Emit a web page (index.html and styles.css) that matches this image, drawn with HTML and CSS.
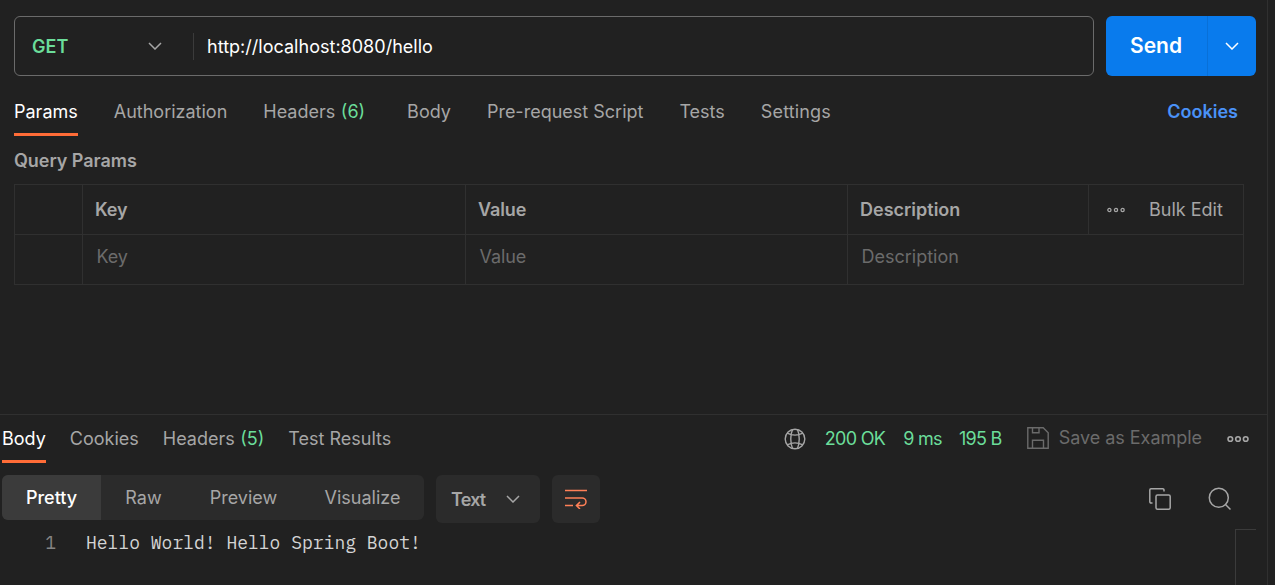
FILE: index.html
```
<!DOCTYPE html>
<html lang="en">
<head>
<meta charset="utf-8">
<title>GET http://localhost:8080/hello</title>
<link rel="stylesheet" href="styles.css">
</head>
<body>
<div class="app">
  <main class="pane">
    <section class="request">
      <div class="url-row">
        <div class="url-box">
          <div class="method"><span>GET</span>
            <svg class="chevron" width="14" height="8" viewBox="0 0 14 8"><path d="M1 1l6 6 6-6"/></svg>
          </div>
          <div class="url">http://localhost:8080/hello</div>
        </div>
        <div class="send">
          <button class="send-main">Send</button>
          <button class="send-more"><svg class="chevron" width="14" height="8" viewBox="0 0 14 8"><path d="M1 1l6 6 6-6"/></svg></button>
        </div>
      </div>
      <nav class="tabs request-tabs">
        <a class="tab active">Params</a>
        <a class="tab">Authorization</a>
        <a class="tab has-count">Headers <span class="count">(6)</span></a>
        <a class="tab">Body</a>
        <a class="tab">Pre-request Script</a>
        <a class="tab">Tests</a>
        <a class="tab settings">Settings</a>
        <a class="cookies">Cookies</a>
      </nav>
      <h2 class="section-title">Query Params</h2>
      <div class="params">
        <div class="row head">
          <div class="cell check"></div>
          <div class="cell">Key</div>
          <div class="cell">Value</div>
          <div class="cell wide">Description</div>
          <div class="cell actions">
            <svg class="dots" width="18" height="6" viewBox="0 0 18 6"><circle cx="2.4" cy="3" r="1.6"/><circle cx="9" cy="3" r="1.6"/><circle cx="15.6" cy="3" r="1.6"/></svg>
            <span>Bulk Edit</span>
          </div>
        </div>
        <div class="row entry">
          <div class="cell check"></div>
          <div class="cell">Key</div>
          <div class="cell">Value</div>
          <div class="cell wide">Description</div>
        </div>
      </div>
    </section>
    <section class="response">
      <div class="response-head">
        <nav class="tabs response-tabs">
          <a class="tab active">Body</a>
          <a class="tab">Cookies</a>
          <a class="tab">Headers <span class="count">(5)</span></a>
          <a class="tab">Test Results</a>
        </nav>
        <div class="status">
          <svg class="icon globe" width="22" height="22" viewBox="0 0 22 22"><circle cx="11" cy="11" r="9.8"/><path d="M8.500 1.600C6.200 7 6.200 15 8.500 20.400M13.500 1.600c2.300 5.400 2.300 13.400 0 18.800M3.200 5.200c4.600 2.300 11 2.300 15.600 0M3.200 16.800c4.600-2.300 11-2.300 15.600 0"/></svg>
          <span class="code">200 OK</span>
          <span class="time">9 ms</span>
          <span class="size">195 B</span>
          <span class="save">
            <svg class="icon save-icon" width="22" height="22" viewBox="0 0 22 22"><path d="M.8.8h15.400l5 5v15.400H.8zM5.500.8v5h6.500v-5M5.500 21.200v-8h11v8"/></svg>
            <span>Save as Example</span>
          </span>
          <svg class="dots big" width="22" height="8" viewBox="0 0 22 8"><circle cx="3.300" cy="4" r="2.300"/><circle cx="11" cy="4" r="2.300"/><circle cx="18.700" cy="4" r="2.300"/></svg>
        </div>
      </div>
      <div class="toolbar">
        <div class="segments">
          <span class="segment selected">Pretty</span>
          <span class="segment raw">Raw</span>
          <span class="segment preview">Preview</span>
          <span class="segment visualize">Visualize</span>
        </div>
        <div class="language"><span>Text</span><svg class="chevron" width="14" height="8" viewBox="0 0 14 8"><path d="M1 1l6 6 6-6"/></svg></div>
        <div class="wrap"><svg width="22" height="20" viewBox="0 0 22 20"><path d="M0 1.500h22M0 9h17.200a3.800 3.800 0 0 1 0 7.600H12M0 16.500h8M15 13l-3.600 3.600L15 20"/></svg></div>
        <div class="tools">
          <svg class="icon" width="22" height="22" viewBox="0 0 22 22"><path d="M3.500 15H2a1.200 1.200 0 0 1-1.200-1.200V2A1.200 1.200 0 0 1 2 .8h11.800A1.200 1.200 0 0 1 15 2v1.500"/><rect x="7" y="7" width="14.200" height="14.200" rx="1.500"/></svg>
          <svg class="icon" width="24" height="24" viewBox="0 0 24 24"><circle cx="10.800" cy="10.800" r="9.500"/><path d="M17.500 17.500l5 5"/></svg>
        </div>
      </div>
      <div class="editor">
        <span class="line-number">1</span>
        <code class="line">Hello World! Hello Spring Boot!</code>
        <div class="minimap"></div>
      </div>
    </section>
  </main>
</div>
</body>
</html>
```
FILE: styles.css
```
* { box-sizing: border-box; }
body {
  margin: 0;
  background: #212121;
  color: #a6a6a6;
  font: 18px/24px Inter, "Liberation Sans", sans-serif;
  overflow: hidden;
}
svg { display: block; fill: none; flex: none; }
button { border: 0; padding: 0; background: none; color: inherit; font: inherit; }
.app { height: 585px; }
.pane { width: 1268px; height: 585px; border-right: 1px solid #303030; display: flex; flex-direction: column; }
.request { height: 414px; padding: 16px 11px 0 14px; }
.url-row { display: flex; gap: 12px; height: 60px; }
.url-box { width: 1080px; border: 1px solid #6b6b6b; border-radius: 6px; display: flex; align-items: center; }
.method { width: 179px; height: 27px; border-right: 1px solid #3b3b3b; padding: 0 31px 0 17px; display: flex; align-items: center; justify-content: space-between; color: #6bdd9a; font-weight: 600; }
.method span { padding-top: 2px; }
.chevron { stroke: #a6a6a6; stroke-width: 1.5; }
.url { padding: 2px 0 0 13px; color: #fff; letter-spacing: 0.02px; }
.send { width: 150px; display: flex; background: #097bed; border-radius: 6px; color: #fff; }
.send-main { width: 102px; padding-right: 1px; border-right: 1px solid #0870d8; font-size: 21px; font-weight: 600; }
.send-more { flex: 1; display: flex; align-items: center; justify-content: center; }
.send-more .chevron { stroke: #fff; }
.tabs { display: flex; gap: 36px; white-space: nowrap; }
.request-tabs { height: 60px; padding-top: 24px; }
.tab { height: 36px; }
.tab.active { color: #fff; border-bottom: 3px solid #ff6c37; }
.count { color: #6bdd9a; margin-left: 0.5px; }
.has-count { padding-right: 6px; }
.settings { letter-spacing: 0.15px; }
.cookies { margin: 0 18px 0 auto; color: #4a92f7; font-weight: 600; }
.section-title { margin: 13px 0 11px; font-size: 18px; line-height: 24px; font-weight: 600; letter-spacing: -0.05px; }
.params { width: 1230px; border: 1px solid #303030; }
.row { height: 49px; display: grid; grid-template-columns: 67px 383px 382px 241px 155px; }
.head { height: 50px; border-bottom: 1px solid #303030; font-weight: 600; }
.cell { padding: 13px 0 0 12px; border-left: 1px solid #303030; letter-spacing: -0.1px; }
.cell.check { border-left: 0; }
.cell.wide { letter-spacing: 0; }
.entry { color: #6b6b6b; grid-template-columns: 67px 383px 382px 396px; }
.entry .cell { padding: 10px 0 0 13.5px; }
.head .actions { padding: 0 0 0 18px; display: flex; align-items: center; gap: 24px; font-weight: 400; letter-spacing: 0; }
.dots { stroke: #a6a6a6; stroke-width: 1.3; }
.dots.big { stroke-width: 1.6; }
.response { flex: 1; border-top: 1px solid #303030; display: flex; flex-direction: column; }
.response-head { height: 48px; display: flex; justify-content: space-between; padding: 12px 18px 0 2px; }
.response-tabs { gap: 24px; }
.status { height: 24px; display: flex; align-items: center; white-space: nowrap; color: #6bdd9a; letter-spacing: -0.7px; }
.icon { stroke: #a6a6a6; stroke-width: 1.5; }
.globe { margin-right: 19px; }
.globe, .save-icon { stroke-width: 1.4; }
.code { margin-right: 18px; }
.time { margin-right: 17px; }
.size { margin-right: 25px; }
.save { display: flex; align-items: center; gap: 10px; margin-right: 25px; padding-bottom: 2px; color: #6b6b6b; letter-spacing: -0.03px; }
.save-icon { stroke: #6b6b6b; }
.toolbar { height: 60px; display: flex; gap: 12px; padding: 12px 35px 0 2px; }
.segments { width: 422px; height: 45px; display: flex; background: #2b2b2b; border-radius: 6px; overflow: hidden; line-height: 45px; }
.segment { text-align: center; }
.selected { width: 99px; background: #3b3b3b; color: #fff; font-weight: 500; }
.raw { width: 85px; }
.preview { width: 115px; }
.visualize { width: 123px; }
.language, .wrap { height: 48px; display: flex; align-items: center; background: #2b2b2b; border-radius: 6px; }
.language { width: 104px; padding: 0 20px 0 15px; justify-content: space-between; font-weight: 600; letter-spacing: -0.8px; }
.language span { padding-top: 1px; }
.wrap { width: 48px; justify-content: center; stroke: #ff8057; stroke-width: 1.5; }
.tools { height: 48px; margin-left: auto; display: flex; align-items: center; gap: 37px; }
.editor { flex: 1; display: flex; margin-top: -1px; font: 18px/27px "IBM Plex Mono", "Liberation Mono", monospace; padding-top: 7px; }
.line-number { width: 56px; text-align: right; color: #858585; }
.line { margin-left: 30px; font: inherit; color: #d4d4d4; }
.minimap { width: 21px; margin: 0 11px 0 auto; border: solid #3b3b3b; border-width: 1px 0 0 1px; }
```
